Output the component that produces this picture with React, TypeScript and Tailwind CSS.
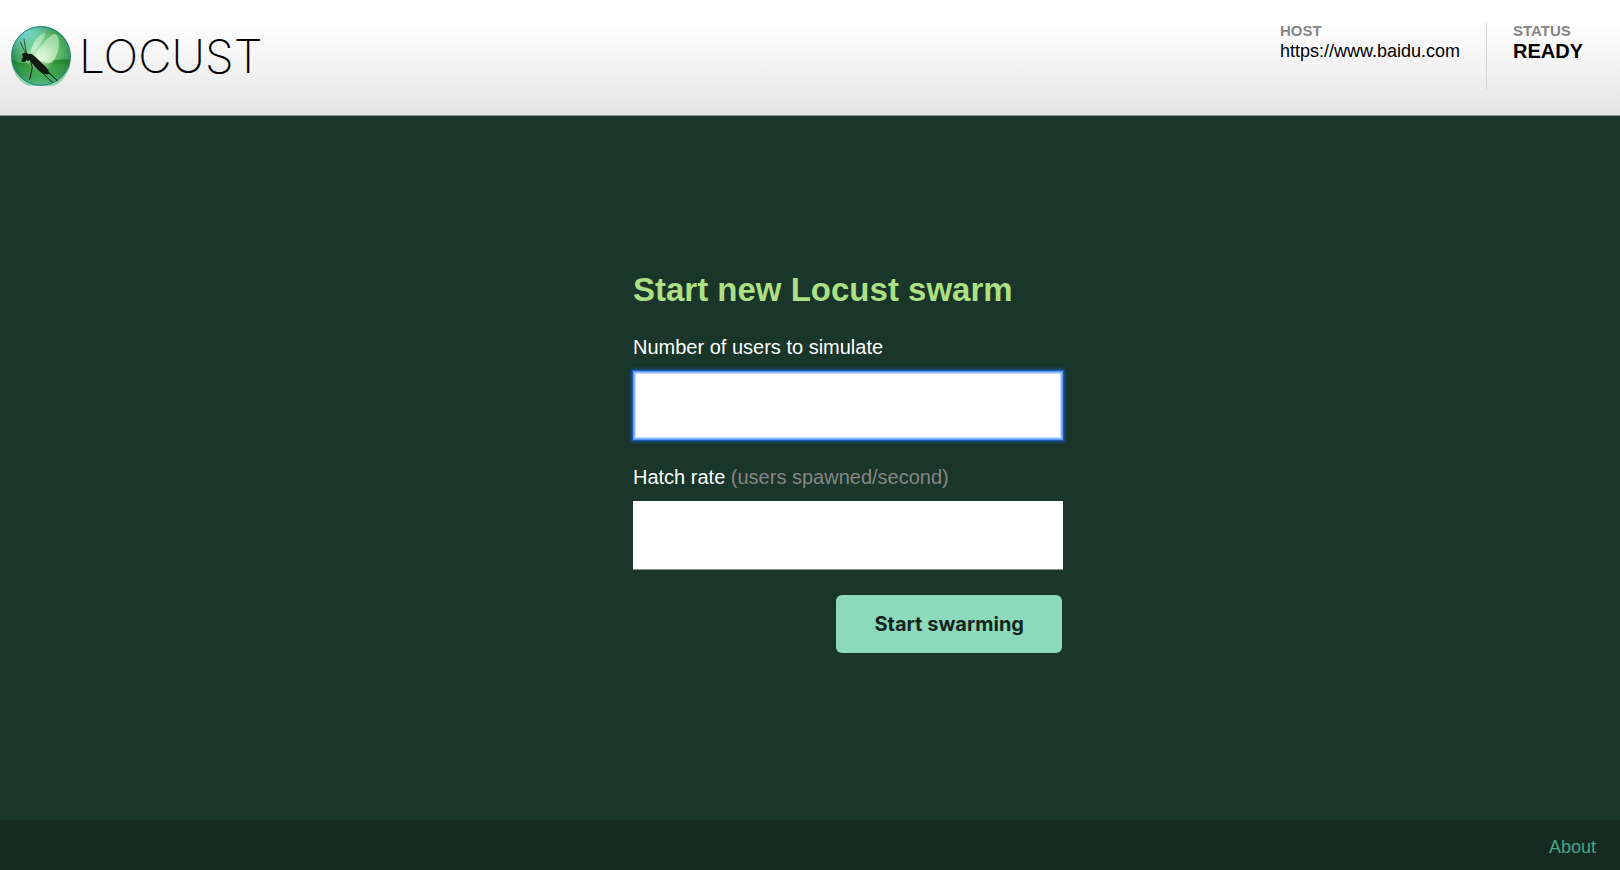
import { useState } from "react";

function LocustMark() {
  return (
    <svg viewBox="17 17 180 180" className="h-15 w-15 shrink-0" aria-hidden="true">
      <defs>
        <radialGradient id="orb" gradientUnits="userSpaceOnUse" cx="110" cy="98" r="96">
          <stop offset="0" stopColor="#b4eab0" />
          <stop offset="0.3" stopColor="#7fd083" />
          <stop offset="0.62" stopColor="#55b262" />
          <stop offset="0.9" stopColor="#37945a" />
          <stop offset="1" stopColor="#1f7a64" />
        </radialGradient>
        <linearGradient id="shade" x1="0" y1="0" x2="0" y2="1">
          <stop offset="0" stopColor="#0b6a0d" stopOpacity="0.65" />
          <stop offset="0.45" stopColor="#2a9c34" stopOpacity="0.4" />
          <stop offset="1" stopColor="#7fe3c0" stopOpacity="0.8" />
        </linearGradient>
        <radialGradient id="sky" gradientUnits="userSpaceOnUse" cx="60" cy="30" r="80">
          <stop offset="0" stopColor="#7fe0e6" stopOpacity="0.9" />
          <stop offset="1" stopColor="#7fe0e6" stopOpacity="0" />
        </radialGradient>
        <radialGradient id="glow" gradientUnits="userSpaceOnUse" cx="104" cy="112" r="44">
          <stop offset="0" stopColor="#f4fff0" stopOpacity="0.9" />
          <stop offset="1" stopColor="#d5f7cc" stopOpacity="0" />
        </radialGradient>
        <linearGradient id="wing" x1="0.6" y1="0" x2="0.3" y2="1">
          <stop offset="0" stopColor="#b5e5b8" stopOpacity="0.7" />
          <stop offset="1" stopColor="#e6fae0" stopOpacity="0.7" />
        </linearGradient>
      </defs>
      <circle cx="107" cy="107" r="89" fill="url(#orb)" />
      <path d="M18 116C48 136 76 128 107 124S170 116 196 118A89 89 0 0 1 18 116Z" fill="url(#shade)" />
      <circle cx="107" cy="107" r="89" fill="url(#sky)" />
      <circle cx="104" cy="112" r="44" fill="url(#glow)" />
      <circle cx="107" cy="107" r="88" fill="none" stroke="#21817b" strokeWidth="3" />
      <path d="M77 96C76 78 98 42 118 38C124 46 104 74 80 98Z" fill="url(#wing)" />
      <path d="M90 105C104 82 130 43 148 41C166 43 165 91 145 120C134 135 118 132 90 107Z" fill="url(#wing)" />
      <path
        d="M50 103C55 95 64 96 69 101L79 101L87 107L103 122L119 137L131 151L127 153L134 159L127 162L113 160L97 148L79 128L73 120L68 122L62 118L60 125L49 124L49 116L53 111Z"
        fill="#101a12"
      />
      <g fill="none" stroke="#101a12" strokeLinecap="round" strokeLinejoin="round">
        <path d="M61 99L45 65M63 98L56 56" strokeWidth="2" />
        <path d="M76 123L81 142L73 177" strokeWidth="3" />
        <path d="M100 145L136 182L141 185M119 145L155 180" strokeWidth="3" />
        <path d="M127 157L158 182" strokeWidth="2" opacity="0.6" />
      </g>
    </svg>
  );
}

function Header() {
  return (
    <header className="border-b border-[#8a8f8c] bg-linear-to-b from-white from-20% to-[#e4e4e4]">
      <div className="flex h-[115px] items-start justify-between pr-[37px] pl-[11px]">
        <a href="/" className="flex items-center gap-2 pt-[26px]">
          <LocustMark />
          <span className="font-['Inter'] text-[46px] leading-[60px] font-extralight text-black">LOCUST</span>
        </a>
        <dl className="flex pt-[23px]">
          <div className="h-[67px] border-r border-[#d6d6d6] pr-[26px]">
            <dt className="text-[15px] leading-4 font-bold text-[#868686]">HOST</dt>
            <dd className="text-[18px] leading-6 text-black">https://www.baidu.com</dd>
          </div>
          <div className="pl-[26px]">
            <dt className="text-[15px] leading-4 font-bold text-[#868686]">STATUS</dt>
            <dd className="text-[20px] leading-6 font-bold text-black">READY</dd>
          </div>
        </dl>
      </div>
    </header>
  );
}

function SwarmForm() {
  const [users, setUsers] = useState("");
  const [rate, setRate] = useState("");

  return (
    <form className="w-[430px]" onSubmit={(e) => e.preventDefault()}>
      <h2 className="text-[33px] leading-10 font-bold text-[#addf84]">Start new Locust swarm</h2>
      <label htmlFor="locust_count" className="mt-[25px] block text-[20px] leading-6 text-white">
        Number of users to simulate
      </label>
      <input
        id="locust_count"
        type="text"
        autoFocus
        value={users}
        onChange={(e) => setUsers(e.target.value)}
        className="mt-3 block h-[69px] w-full bg-white px-3 text-[24px] text-black caret-transparent outline-none focus:shadow-[inset_0_0_0_1px_#5f9bf5,inset_0_0_0_2px_#8fb9fa,inset_0_0_0_3px_#c6dbfd,0_0_0_1px_#1a5cb8,0_0_3px_2px_#1a4f96]"
      />
      <label htmlFor="hatch_rate" className="mt-[25px] block text-[20px] leading-6 text-white">
        Hatch rate <span className="text-[#868686]">(users spawned/second)</span>
      </label>
      <input
        id="hatch_rate"
        type="text"
        value={rate}
        onChange={(e) => setRate(e.target.value)}
        className="mt-3 block h-[69px] w-full border-b border-[#8a8f8c] bg-white px-3 text-[24px] text-black outline-none"
      />
      <button
        type="submit"
        className="mt-[25px] mr-px ml-auto block rounded-md bg-[#8cdabb] px-[38px] py-[17px] font-['Inter'] text-[20px] leading-6 font-bold text-[#14241d]"
      >
        Start swarming
      </button>
    </form>
  );
}

export default function App() {
  return (
    <div className="flex min-h-screen flex-col bg-[#1a3529] font-['Liberation_Sans',Arial,sans-serif]">
      <Header />
      <main className="flex flex-1 justify-center pt-[154px] pl-[76px]">
        <SwarmForm />
      </main>
      <footer className="flex h-[50px] items-center justify-end bg-[#152a21] px-6 pt-[3px]">
        <a href="#about" className="text-[18px] leading-6 text-[#4aa583]">
          About
        </a>
      </footer>
    </div>
  );
}
